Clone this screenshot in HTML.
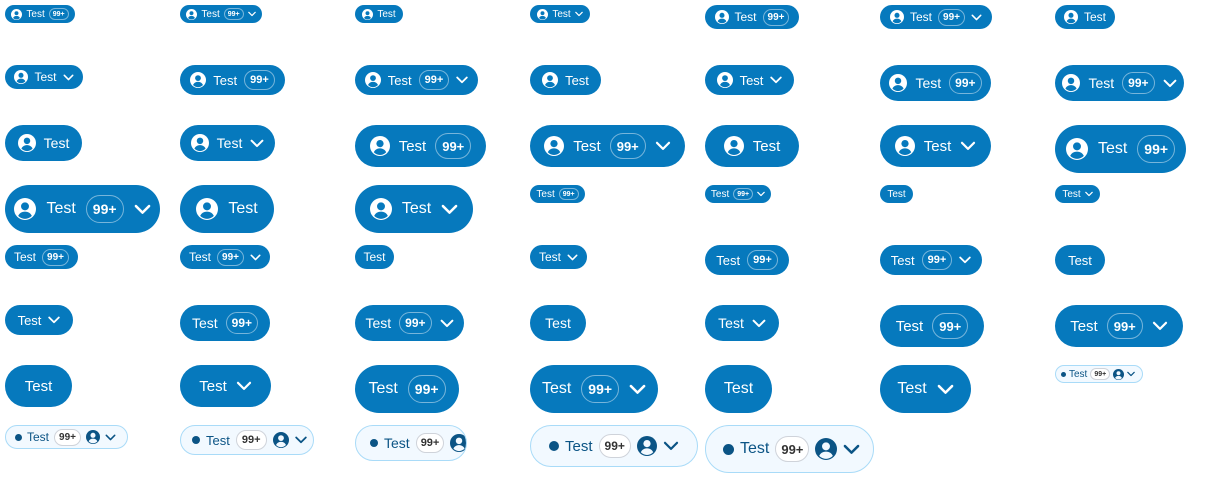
<!DOCTYPE html>
<html><head><meta charset="utf-8"><style>
body{margin:0;width:1225px;height:480px;background:#fff;position:relative;overflow:hidden;font-family:"Liberation Sans",sans-serif}
.b{position:absolute;box-sizing:border-box;background:#0679bd;color:#fff;border-radius:999px;display:flex;align-items:center;justify-content:center;white-space:nowrap;--in:#0679bd}
.b svg.p{fill:currentColor;flex:none}
.b svg.c{fill:none;stroke:currentColor;stroke-width:1.8;stroke-linecap:round;stroke-linejoin:round;flex:none}
.bd{border:1px solid rgba(255,255,255,.45);border-radius:999px;display:inline-flex;align-items:center;justify-content:center;font-weight:bold;box-sizing:border-box;flex:none}
.xs{height:18px;font-size:10px;gap:4px}.xs .p{width:11px;height:11px}.xs .c{width:8px;height:6px}.xs .bd{height:12px;font-size:7px;padding:0 3px}
.sm{height:24px;font-size:12px;gap:6px}.sm .p{width:14px;height:14px}.sm .c{width:11px;height:7px}.sm .bd{height:17px;font-size:10px;padding:0 4px}
.md{height:30px;font-size:13px;gap:7px}.md .p{width:16px;height:16px}.md .c{width:12px;height:8px}.md .bd{height:20px;font-size:11px;padding:0 5px}
.lg{height:36px;font-size:14px;gap:8px}.lg .p{width:18px;height:18px}.lg .c{width:14px;height:9px}.lg .bd{height:22px;font-size:12px;padding:0 5px}
.xl{height:42px;font-size:15px;gap:9px}.xl .p{width:20px;height:20px}.xl .c{width:16px;height:10px}.xl .bd{height:26px;font-size:13px;padding:0 6px}
.xxl{height:48px;font-size:16px;gap:10px}.xxl .p{width:22px;height:22px}.xxl .c{width:17px;height:11px}.xxl .bd{height:28px;font-size:14px;padding:0 6px}
.li{background:#f2f9ff;border:1px solid #a9dbf8;color:#0b5485;--in:#f2f9ff;justify-content:flex-start;overflow:hidden}
.li .bd{background:#fff;border-color:#cfd3da;color:#333}
.li.sm{gap:5px}.li.md{gap:6px}.li.lg{gap:6px}.li.xl{gap:6px}.li.xxl{gap:6px}
.li.lg .bd{height:20px;font-size:11px;padding:0 4px}
.li.xl .bd{height:24px;font-size:12px;padding:0 5px}
.li.xxl .bd{height:26px;font-size:13px;padding:0 5px}
.dot{border-radius:50%;background:#0b5485;flex:none}
.xs .dot{width:5px;height:5px}.sm .dot{width:7px;height:7px}.md .dot{width:8px;height:8px}.lg .dot{width:8px;height:8px}.xl .dot{width:10px;height:10px}.xxl .dot{width:11px;height:11px}
</style></head><body>
<svg width="0" height="0" style="position:absolute"><defs>
<symbol id="pi" viewBox="0 0 20 20"><circle cx="10" cy="10" r="10"/><circle cx="10" cy="7.6" r="3.6" style="fill:var(--in)"/><path d="M3.8 16.3C5 13.6 7.3 12.4 10 12.4S15 13.6 16.2 16.3C14.6 18 12.4 19 10 19S5.4 18 3.8 16.3Z" style="fill:var(--in)"/></symbol>
<symbol id="ch" viewBox="0 0 12 8"><polyline points="1.2,1.5 6,6.3 10.8,1.5"/></symbol>
</defs></svg>

<div class="b xs" style="left:5px;top:5px;width:70px"><svg class="p"><use href="#pi"/></svg>Test<span class="bd">99+</span></div>
<div class="b xs" style="left:180px;top:5px;width:82px"><svg class="p"><use href="#pi"/></svg>Test<span class="bd">99+</span><svg class="c"><use href="#ch"/></svg></div>
<div class="b xs" style="left:355px;top:5px;width:48px"><svg class="p"><use href="#pi"/></svg>Test</div>
<div class="b xs" style="left:530px;top:5px;width:60px"><svg class="p"><use href="#pi"/></svg>Test<svg class="c"><use href="#ch"/></svg></div>
<div class="b sm" style="left:705px;top:5px;width:94px"><svg class="p"><use href="#pi"/></svg>Test<span class="bd">99+</span></div>
<div class="b sm" style="left:880px;top:5px;width:112px"><svg class="p"><use href="#pi"/></svg>Test<span class="bd">99+</span><svg class="c"><use href="#ch"/></svg></div>
<div class="b sm" style="left:1055px;top:5px;width:60px"><svg class="p"><use href="#pi"/></svg>Test</div>

<div class="b sm" style="left:5px;top:65px;width:78px"><svg class="p"><use href="#pi"/></svg>Test<svg class="c"><use href="#ch"/></svg></div>
<div class="b md" style="left:180px;top:65px;width:105px"><svg class="p"><use href="#pi"/></svg>Test<span class="bd">99+</span></div>
<div class="b md" style="left:355px;top:65px;width:123px"><svg class="p"><use href="#pi"/></svg>Test<span class="bd">99+</span><svg class="c"><use href="#ch"/></svg></div>
<div class="b md" style="left:530px;top:65px;width:71px"><svg class="p"><use href="#pi"/></svg>Test</div>
<div class="b md" style="left:705px;top:65px;width:89px"><svg class="p"><use href="#pi"/></svg>Test<svg class="c"><use href="#ch"/></svg></div>
<div class="b lg" style="left:880px;top:65px;width:111px"><svg class="p"><use href="#pi"/></svg>Test<span class="bd">99+</span></div>
<div class="b lg" style="left:1055px;top:65px;width:129px"><svg class="p"><use href="#pi"/></svg>Test<span class="bd">99+</span><svg class="c"><use href="#ch"/></svg></div>

<div class="b lg" style="left:5px;top:125px;width:77px"><svg class="p"><use href="#pi"/></svg>Test</div>
<div class="b lg" style="left:180px;top:125px;width:95px"><svg class="p"><use href="#pi"/></svg>Test<svg class="c"><use href="#ch"/></svg></div>
<div class="b xl" style="left:355px;top:125px;width:131px"><svg class="p"><use href="#pi"/></svg>Test<span class="bd">99+</span></div>
<div class="b xl" style="left:530px;top:125px;width:155px"><svg class="p"><use href="#pi"/></svg>Test<span class="bd">99+</span><svg class="c"><use href="#ch"/></svg></div>
<div class="b xl" style="left:705px;top:125px;width:94px"><svg class="p"><use href="#pi"/></svg>Test</div>
<div class="b xl" style="left:880px;top:125px;width:111px"><svg class="p"><use href="#pi"/></svg>Test<svg class="c"><use href="#ch"/></svg></div>
<div class="b xxl" style="left:1055px;top:125px;width:131px"><svg class="p"><use href="#pi"/></svg>Test<span class="bd">99+</span></div>

<div class="b xxl" style="left:5px;top:185px;width:155px"><svg class="p"><use href="#pi"/></svg>Test<span class="bd">99+</span><svg class="c"><use href="#ch"/></svg></div>
<div class="b xxl" style="left:180px;top:185px;width:94px"><svg class="p"><use href="#pi"/></svg>Test</div>
<div class="b xxl" style="left:355px;top:185px;width:118px"><svg class="p"><use href="#pi"/></svg>Test<svg class="c"><use href="#ch"/></svg></div>
<div class="b xs" style="left:530px;top:185px;width:55px">Test<span class="bd">99+</span></div>
<div class="b xs" style="left:705px;top:185px;width:66px">Test<span class="bd">99+</span><svg class="c"><use href="#ch"/></svg></div>
<div class="b xs" style="left:880px;top:185px;width:33px">Test</div>
<div class="b xs" style="left:1055px;top:185px;width:45px">Test<svg class="c"><use href="#ch"/></svg></div>

<div class="b sm" style="left:5px;top:245px;width:73px">Test<span class="bd">99+</span></div>
<div class="b sm" style="left:180px;top:245px;width:90px">Test<span class="bd">99+</span><svg class="c"><use href="#ch"/></svg></div>
<div class="b sm" style="left:355px;top:245px;width:39px">Test</div>
<div class="b sm" style="left:530px;top:245px;width:57px">Test<svg class="c"><use href="#ch"/></svg></div>
<div class="b md" style="left:705px;top:245px;width:84px">Test<span class="bd">99+</span></div>
<div class="b md" style="left:880px;top:245px;width:102px">Test<span class="bd">99+</span><svg class="c"><use href="#ch"/></svg></div>
<div class="b md" style="left:1055px;top:245px;width:50px">Test</div>

<div class="b md" style="left:5px;top:305px;width:68px">Test<svg class="c"><use href="#ch"/></svg></div>
<div class="b lg" style="left:180px;top:305px;width:90px">Test<span class="bd">99+</span></div>
<div class="b lg" style="left:355px;top:305px;width:109px">Test<span class="bd">99+</span><svg class="c"><use href="#ch"/></svg></div>
<div class="b lg" style="left:530px;top:305px;width:56px">Test</div>
<div class="b lg" style="left:705px;top:305px;width:74px">Test<svg class="c"><use href="#ch"/></svg></div>
<div class="b xl" style="left:880px;top:305px;width:104px">Test<span class="bd">99+</span></div>
<div class="b xl" style="left:1055px;top:305px;width:128px">Test<span class="bd">99+</span><svg class="c"><use href="#ch"/></svg></div>

<div class="b xl" style="left:5px;top:365px;width:67px">Test</div>
<div class="b xl" style="left:180px;top:365px;width:91px">Test<svg class="c"><use href="#ch"/></svg></div>
<div class="b xxl" style="left:355px;top:365px;width:104px">Test<span class="bd">99+</span></div>
<div class="b xxl" style="left:530px;top:365px;width:128px">Test<span class="bd">99+</span><svg class="c"><use href="#ch"/></svg></div>
<div class="b xxl" style="left:705px;top:365px;width:67px">Test</div>
<div class="b xxl" style="left:880px;top:365px;width:91px">Test<svg class="c"><use href="#ch"/></svg></div>
<div class="b xs li" style="left:1055px;top:365px;width:88px;padding-left:5px;gap:3px"><span class="dot"></span>Test<span class="bd">99+</span><svg class="p"><use href="#pi"/></svg><svg class="c"><use href="#ch"/></svg></div>

<div class="b sm li" style="left:5px;top:425px;width:123px;padding-left:9px"><span class="dot"></span>Test<span class="bd">99+</span><svg class="p"><use href="#pi"/></svg><svg class="c"><use href="#ch"/></svg></div>
<div class="b md li" style="left:180px;top:425px;width:134px;padding-left:11px"><span class="dot"></span>Test<span class="bd">99+</span><svg class="p"><use href="#pi"/></svg><svg class="c"><use href="#ch"/></svg></div>
<div class="b lg li" style="left:355px;top:425px;width:112px;padding-left:14px"><span class="dot"></span>Test<span class="bd">99+</span><svg class="p"><use href="#pi"/></svg><svg class="c"><use href="#ch"/></svg></div>
<div class="b xl li" style="left:530px;top:425px;width:168px;padding-left:18px"><span class="dot"></span>Test<span class="bd">99+</span><svg class="p"><use href="#pi"/></svg><svg class="c"><use href="#ch"/></svg></div>
<div class="b xxl li" style="left:705px;top:425px;width:169px;padding-left:17px"><span class="dot"></span>Test<span class="bd">99+</span><svg class="p"><use href="#pi"/></svg><svg class="c"><use href="#ch"/></svg></div>
</body></html>
